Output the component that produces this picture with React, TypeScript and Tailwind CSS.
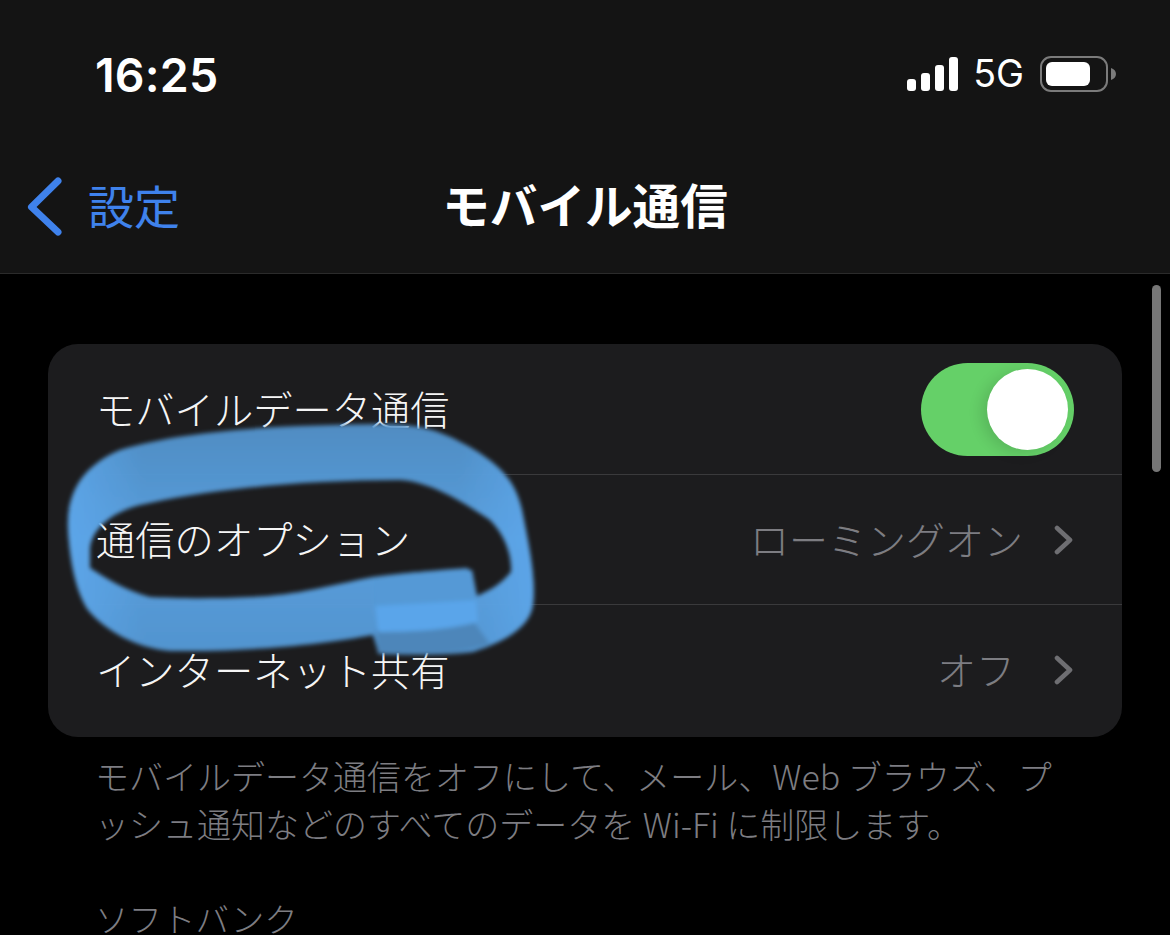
import React from "react";

const font = { fontFamily: '"Noto Sans CJK JP", sans-serif' };

const ringPath =
  "M68 530C66 490 85 465 120 450C190 428 300 425 380 424C420 424 440 430 470 447C500 465 515 480 522 510C530 550 536 580 533 605C530 625 510 640 473 652C440 656 410 655 378 652L373 635C330 643 260 652 170 651C135 648 105 630 88 610C75 590 70 560 68 530Z M90 548C92 530 110 510 150 503C220 488 310 480 400 480C430 482 460 500 490 520C505 535 512 555 511 572C500 585 490 590 477 596L472 570C440 570 410 572 373 577C330 585 300 595 250 597C210 599 170 598 150 597C125 590 105 578 90 568Z";

function Chevron() {
  return (
    <svg className="ml-[31px]" width="20" height="32" viewBox="0 0 20 32">
      <path d="M3 4L16 16L3 28" fill="none" stroke="#6e6e72" strokeWidth="4.6" strokeLinecap="round" strokeLinejoin="round" />
    </svg>
  );
}

function Row({ label, value, border, valueGap }: { label: string; value: string; border?: boolean; valueGap?: boolean }) {
  return (
    <div className="flex h-[130px] items-center pl-[48px]">
      <div className={`flex h-full flex-1 items-center pr-[48px] ${border ? "border-b border-[#3a3a3c]" : ""}`}>
        <span className="flex-1 pb-[3px] text-[39.3px] font-light leading-none text-[#f5f5f5]">{label}</span>
        <span className={`${valueGap ? "mr-[8px]" : ""} pb-[3px] text-[39px] font-light leading-none text-[#7d7d82]`}>{value}</span>
        <Chevron />
      </div>
    </div>
  );
}

function Scribble() {
  return (
    <svg className="pointer-events-none absolute left-0 top-0" width="1170" height="935" viewBox="0 0 1170 935">
      <defs>
        <linearGradient id="ring" x1="0" y1="424" x2="0" y2="655" gradientUnits="userSpaceOnUse">
          <stop offset="0" stopColor="#5291c9" />
          <stop offset="0.5" stopColor="#5aa3e4" />
          <stop offset="1" stopColor="#5599d6" />
        </linearGradient>
        <linearGradient id="sides" x1="68" y1="0" x2="535" y2="0" gradientUnits="userSpaceOnUse">
          <stop offset="0" stopColor="#5ea9ee" stopOpacity="0.7" />
          <stop offset="0.16" stopColor="#5ea9ee" stopOpacity="0" />
          <stop offset="0.84" stopColor="#5ea9ee" stopOpacity="0" />
          <stop offset="1" stopColor="#5ea9ee" stopOpacity="0.7" />
        </linearGradient>
        <filter id="soft" x="-5%" y="-5%" width="110%" height="110%">
          <feGaussianBlur stdDeviation="2.2" />
        </filter>
      </defs>
      <g filter="url(#soft)">
        <path fillRule="evenodd" fill="url(#ring)" fillOpacity="0.96" d={ringPath} />
        <path fillRule="evenodd" fill="url(#sides)" d={ringPath} />
        <path fill="#4d86ba" d="M376 630L474 622L490 644C460 654 420 656 378 654Z" />
        <path fill="#5aa5ea" d="M375 604L476 598L478 622C450 629 420 632 378 632Z" />
        <path fill="#5599d6" d="M374 578C410 572 440 570 468 568L476 600L375 606Z" />
      </g>
    </svg>
  );
}

export default function App() {
  return (
    <div className="relative h-[935px] w-[1170px] overflow-hidden bg-black" style={font}>
      <header className="flex h-[274px] flex-col border-b border-[#2b2b2b] bg-[#141414]">
        <div className="flex h-[150px] items-center pl-[95px] pr-[54px]">
          <span
            className="flex-1 text-[46.5px] font-semibold leading-none tracking-[0.2px] text-white"
            style={{ fontFamily: "Inter, sans-serif" }}
          >
            16:25
          </span>
          <div className="mb-[2px] flex items-center">
            <div className="flex items-end gap-[4.5px]">
              <div className="h-[12px] w-[9.5px] rounded-[3px] bg-white" />
              <div className="h-[18px] w-[9.5px] rounded-[3px] bg-white" />
              <div className="h-[26px] w-[9.5px] rounded-[3px] bg-white" />
              <div className="h-[34px] w-[9.5px] rounded-[3px] bg-white" />
            </div>
            <span
              className="ml-[15px] text-[37.5px] font-normal leading-none text-white"
              style={{ fontFamily: "Inter, sans-serif" }}
            >
              5G
            </span>
            <div className="ml-[16px] flex items-center">
              <div className="flex h-[36px] w-[68px] items-center rounded-[11px] border-[2.5px] border-[#7b7b7b] pl-[4px]">
                <div className="h-[24px] w-[44px] rounded-[6px] bg-white" />
              </div>
              <svg className="ml-[3px]" width="5" height="12" viewBox="0 0 5 12">
                <path d="M0 0C3 1 5 3 5 6C5 9 3 11 0 12Z" fill="#7b7b7b" />
              </svg>
            </div>
          </div>
        </div>
        <div className="relative flex h-[112px] items-center justify-center pb-[4px]">
          <div className="absolute left-[25px] top-[24px] flex items-center">
            <svg width="40" height="64" viewBox="0 0 40 64">
              <path d="M33 7L6.5 33L33 58" fill="none" stroke="#3f82ec" strokeWidth="7" strokeLinecap="round" strokeLinejoin="round" />
            </svg>
            <span className="mb-[4px] ml-[23px] text-[46px] font-normal leading-none text-[#3f82ec]">設定</span>
          </div>
          <span className="text-[47.6px] font-bold leading-none text-white">モバイル通信</span>
        </div>
      </header>

      <main className="pl-[48px] pr-[48px] pt-[70px]">
        <section className="overflow-hidden rounded-[30px] bg-[#1c1c1e]">
          <div className="flex h-[131px] items-center pl-[48px]">
            <div className="flex h-full flex-1 items-center border-b border-[#3a3a3c] pr-[48px]">
              <span className="flex-1 pb-[3px] text-[39.3px] font-light leading-none text-[#f5f5f5]">モバイルデータ通信</span>
              <div className="flex h-[93px] w-[153px] items-center justify-end rounded-full bg-[#65d068] pr-[6px]">
                <div className="h-[81px] w-[81px] rounded-full bg-white shadow-[-6px_3px_14px_rgba(0,0,0,0.12)]" />
              </div>
            </div>
          </div>
          <Row label="通信のオプション" value="ローミングオン" border />
          <div className="h-[132px]">
            <Row label="インターネット共有" value="オフ" valueGap />
          </div>
        </section>
        <p className="mt-[15px] pl-[47px] text-[34px] font-light leading-[48px] text-[#7d7d82]">
          モバイルデータ通信をオフにして、メール、Web ブラウズ、プ
          <br />
          ッシュ通知などのすべてのデータを Wi-Fi に制限します。
        </p>
        <p className="mt-[46px] pl-[47px] text-[33.5px] font-light leading-[48px] text-[#7d7d82]">ソフトバンク</p>
      </main>

      <div className="absolute left-[1152px] top-[285px] h-[187px] w-[9px] rounded-full bg-[#767676]" />
      <Scribble />
    </div>
  );
}
